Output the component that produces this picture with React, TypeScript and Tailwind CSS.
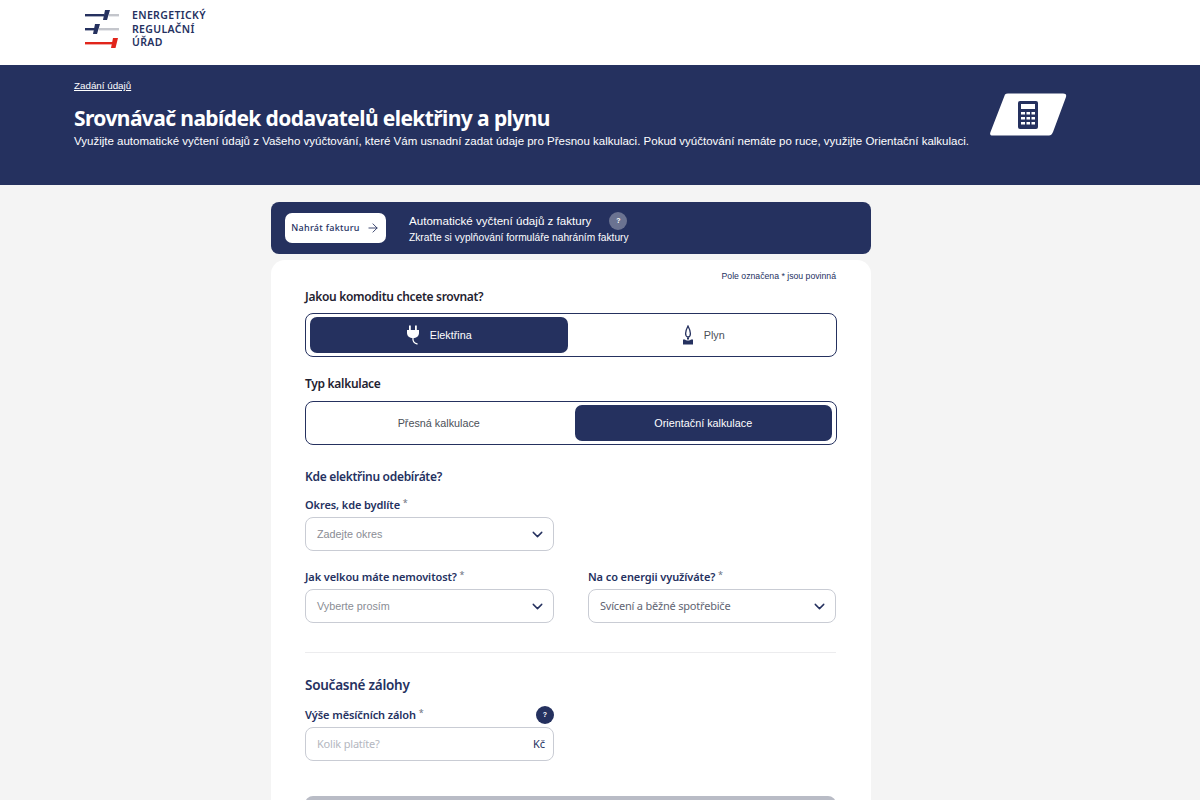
import { ArrowRight, ChevronDown } from 'lucide-react';

const sans = "font-['Liberation_Sans',Arial,sans-serif]";
const head = "font-['Noto_Sans',sans-serif]";

function Logo() {
  return (
    <svg width="36" height="42" viewBox="0 0 36 42" className="shrink-0">
      <rect x="0" y="5" width="19" height="2.4" fill="#25315f" />
      <rect x="24" y="5" width="10" height="2.4" fill="#c4c6cc" />
      <polygon points="20,1 25,1 22,11 18,11" fill="#25315f" />
      <rect x="0" y="19" width="10" height="2.4" fill="#25315f" />
      <rect x="14" y="19" width="20" height="2.4" fill="#c4c6cc" />
      <polygon points="10,15 15,15 12,25 8,25" fill="#25315f" />
      <rect x="0" y="33" width="28" height="2.4" fill="#e1251b" />
      <polygon points="28,29 33,29 30.5,39 26,39" fill="#e1251b" />
    </svg>
  );
}

function CalculatorBadge() {
  return (
    <svg width="78" height="44" viewBox="0 0 78 44">
      <path d="M16 1.5 Q17 0.5 19 0.5 H74 Q78 0.5 77 4 L64 39 Q62.5 42.5 60 42.5 H4 Q0 42.5 1.5 39 Z" fill="#fff" />
      <rect x="29" y="8" width="20" height="28" rx="2" fill="#25315f" />
      <rect x="32" y="11" width="14" height="5" fill="#fff" />
      <rect x="32" y="19" width="4" height="2.5" fill="#fff" />
      <rect x="37.5" y="19" width="3.5" height="2.5" fill="#fff" />
      <rect x="42.5" y="19" width="3.5" height="2.5" fill="#fff" />
      <rect x="32" y="24" width="4" height="2.5" fill="#fff" />
      <rect x="37.5" y="24" width="3.5" height="2.5" fill="#fff" />
      <rect x="42.5" y="24" width="3.5" height="2.5" fill="#fff" />
      <rect x="32" y="29" width="4" height="2.5" fill="#fff" />
      <rect x="37.5" y="29" width="3.5" height="2.5" fill="#fff" />
      <rect x="42.5" y="29" width="3.5" height="2.5" fill="#fff" />
    </svg>
  );
}

function PlugIcon() {
  return (
    <svg width="14" height="20" viewBox="0 0 14 20" fill="none">
      <rect x="3" y="0.5" width="1.8" height="5" fill="#fff" />
      <rect x="9" y="0.5" width="1.8" height="5" fill="#fff" />
      <path d="M1 5 H13 V8 C13 11 10.5 13 7 13 C3.5 13 1 11 1 8 Z" fill="#fff" />
      <path d="M7 13 C6.5 16 8 18.5 11.5 19" stroke="#fff" strokeWidth="1.3" />
    </svg>
  );
}

function FlameIcon() {
  return (
    <svg width="12" height="20" viewBox="0 0 12 20" fill="none">
      <path d="M6 1 C7.6 4 8.4 6 8.4 8.5 C8.4 10.5 7.5 12 6 12 C4.5 12 3.6 10.5 3.6 8.5 C3.6 6 4.4 4 6 1 Z" stroke="#25315f" strokeWidth="1.3" />
      <rect x="5" y="12.5" width="2" height="2" fill="#25315f" />
      <path d="M1 14.5 H3 C4 15.8 8 15.8 9 14.5 H11 V19.5 H1 Z" fill="#25315f" />
    </svg>
  );
}

function FieldLabel({ text }: { text: string }) {
  return (
    <div className={`${head} text-[11px] font-semibold text-[#25315f] leading-[16px] tracking-[-0.1px]`}>
      {text} <span className="relative -top-[3px] font-normal text-[9px] text-[#6b7280]">*</span>
    </div>
  );
}

function SelectBox({ text, dark }: { text: string; dark?: boolean }) {
  return (
    <div className="mt-[3px] h-[34px] rounded-[8px] border border-[#c9ccd4] bg-white pl-[11px] pr-[7px] flex items-center justify-between">
      <span className={dark ? `${head} text-[11px] text-[#5f6472] tracking-[-0.2px]` : `${sans} text-[10.8px] text-[#8a8d94]`}>{text}</span>
      <ChevronDown size={17} strokeWidth={2} className="text-[#25315f]" />
    </div>
  );
}

function Segment({ children, active }: { children: React.ReactNode; active: boolean }) {
  return (
    <div className={`flex-1 h-[36px] rounded-[7px] flex items-center justify-center gap-[10px] ${sans} text-[10.8px] ${active ? 'bg-[#25315f] text-white' : 'text-[#4b4f58]'}`}>
      {children}
    </div>
  );
}

export default function App() {
  return (
    <div className="h-[800px] overflow-hidden bg-[#f4f4f4]">
      {/* Header */}
      <div className="h-[65px] bg-white pl-[85px] pt-[9px] flex items-start gap-[11px]">
        <Logo />
        <div className={`${head} text-[10.5px] font-semibold leading-[13.5px] tracking-[0.35px] text-[#25315f]`}>
          <div>ENERGETICKÝ</div>
          <div>REGULAČNÍ</div>
          <div>ÚŘAD</div>
        </div>
      </div>

      {/* Hero */}
      <div className="h-[120px] bg-[#25315f] text-white pl-[74px] pr-[133px] flex items-start justify-between">
        <div>
          <a className={`${sans} block mt-[14px] text-[9.8px] leading-[14px] underline`}>Zadání údajů</a>
          <h1 className={`${head} mt-[10px] text-[21px] font-bold leading-[31px] tracking-[-0.6px]`}>Srovnávač nabídek dodavatelů elektřiny a plynu</h1>
          <p className={`${sans} text-[11.5px] leading-[14px] whitespace-nowrap`}>
            Využijte automatické vyčtení údajů z Vašeho vyúčtování, které Vám usnadní zadat údaje pro Přesnou kalkulaci. Pokud vyúčtování nemáte po ruce, využijte Orientační kalkulaci.
          </p>
        </div>
        <div className="mt-[28px] shrink-0">
          <CalculatorBadge />
        </div>
      </div>

      <div className="w-[600px] ml-[271px]">
        {/* Invoice banner */}
        <div className="mt-[17px] h-[52px] rounded-[8px] bg-[#25315f] text-white pl-[14px] flex items-center">
          <div className={`w-[101px] h-[30px] rounded-[7px] bg-white flex items-center justify-center gap-[6px] ${head} text-[9px] font-medium tracking-[0.3px] text-[#25315f]`}>
            Nahrát fakturu <ArrowRight size={14} strokeWidth={1.5} />
          </div>
          <div className={`ml-[23px] ${sans}`}>
            <div className="flex items-center text-[11.6px] leading-[16px]">
              Automatické vyčtení údajů z faktury
              <span className="ml-[18px] w-[18px] h-[18px] rounded-full bg-[#6b7391] flex items-center justify-center text-[7px] font-bold">?</span>
            </div>
            <div className="mt-[1px] text-[10.2px] leading-[13px]">Zkraťte si vyplňování formuláře nahráním faktury</div>
          </div>
        </div>

        {/* Form card */}
        <div className="mt-[6px] h-[540px] rounded-t-[14px] bg-white pl-[34px] pr-[35px] pt-[10px]">
          <div className={`${sans} text-right text-[8.7px] leading-[12px] text-[#25315f]`}>Pole označena * jsou povinná</div>

          <div className={`${head} mt-[6px] text-[12px] font-semibold leading-[18px] tracking-[-0.3px] text-[#1f2230]`}>Jakou komoditu chcete srovnat?</div>
          <div className="mt-[7px] h-[44px] w-[532px] rounded-[8px] border border-[#25315f] p-[4px] flex gap-[7px] items-center">
            <Segment active>
              <PlugIcon />
              Elektřina
            </Segment>
            <Segment active={false}>
              <FlameIcon />
              Plyn
            </Segment>
          </div>

          <div className={`${head} mt-[18px] text-[12px] font-semibold leading-[18px] tracking-[-0.3px] text-[#1f2230]`}>Typ kalkulace</div>
          <div className="mt-[8px] h-[44px] w-[532px] rounded-[8px] border border-[#25315f] p-[4px] flex gap-[7px] items-center">
            <Segment active={false}>Přesná kalkulace</Segment>
            <Segment active>Orientační kalkulace</Segment>
          </div>

          <div className={`${head} mt-[23px] text-[12px] font-semibold leading-[18px] tracking-[-0.3px] text-[#25315f]`}>Kde elektřinu odebíráte?</div>

          <div className="mt-[11px] w-[249px]">
            <FieldLabel text="Okres, kde bydlíte" />
            <SelectBox text="Zadejte okres" />
          </div>

          <div className="mt-[18px] grid grid-cols-[249px_248px] gap-[34px]">
            <div>
              <FieldLabel text="Jak velkou máte nemovitost?" />
              <SelectBox text="Vyberte prosím" />
            </div>
            <div>
              <FieldLabel text="Na co energii využíváte?" />
              <SelectBox text="Svícení a běžné spotřebiče" dark />
            </div>
          </div>

          <div className="mt-[29px] border-t border-[#ececee]" />

          <div className={`${head} mt-[23px] text-[13.5px] font-semibold leading-[18px] tracking-[-0.25px] text-[#25315f]`}>Současné zálohy</div>

          <div className="mt-[12px] w-[249px]">
            <div className="flex items-center justify-between">
              <FieldLabel text="Výše měsíčních záloh" />
              <span className={`${sans} w-[18px] h-[18px] rounded-full bg-[#25315f] text-white flex items-center justify-center text-[7px] font-bold`}>?</span>
            </div>
            <div className="mt-[3px] h-[34px] rounded-[8px] border border-[#c9ccd4] bg-white pl-[11px] pr-[8px] flex items-center justify-between">
              <span className={`${head} text-[11px] tracking-[-0.2px] text-[#b4b7c0]`}>Kolik platíte?</span>
              <span className={`${head} text-[11px] text-[#25315f]`}>Kč</span>
            </div>
          </div>

          <div className="mt-[35px] h-[30px] rounded-[8px] bg-[#b9bcc6]" />
        </div>
      </div>
    </div>
  );
}
